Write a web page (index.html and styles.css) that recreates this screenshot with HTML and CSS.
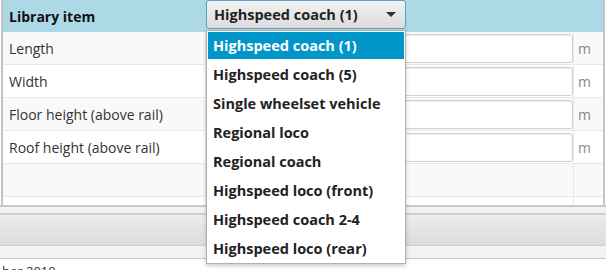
FILE: index.html
```html
<!DOCTYPE html>
<html lang="en">
<head>
    <meta charset="UTF-8">
    <meta name="viewport" content="width=device-width, initial-scale=1.0">
    <title>Library item</title>
    <link rel="stylesheet" href="styles.css">
</head>
<body>
    <div class="page">
        <div class="panel">
            <div class="row header">
                <div class="cell label"><b>Library item</b></div>
                <div class="cell value"></div>
                <div class="cell unit"></div>
            </div>
            <div class="row odd">
                <div class="cell label">Length</div>
                <div class="cell value"><div class="input"></div></div>
                <div class="cell unit">m</div>
            </div>
            <div class="row">
                <div class="cell label">Width</div>
                <div class="cell value"><div class="input"></div></div>
                <div class="cell unit">m</div>
            </div>
            <div class="row odd">
                <div class="cell label">Floor height (above rail)</div>
                <div class="cell value"><div class="input"></div></div>
                <div class="cell unit">m</div>
            </div>
            <div class="row">
                <div class="cell label">Roof height (above rail)</div>
                <div class="cell value"><div class="input"></div></div>
                <div class="cell unit">m</div>
            </div>
            <div class="row odd">
                <div class="cell label"></div>
                <div class="cell value"></div>
                <div class="cell unit"></div>
            </div>
            <div class="row short">
                <div class="cell label"></div>
                <div class="cell value"></div>
                <div class="cell unit"></div>
            </div>
        </div>
        <div class="footer">
            <div class="strip"></div>
            <div class="buttonbar"></div>
            <div class="strip low"></div>
        </div>
        <div class="status">ber 2010</div>

        <!-- open combo box, lies over the table -->
        <div class="combo">
            <div class="combo-button">
                <span>Highspeed coach (1)</span>
                <span class="arrow"></span>
            </div>
            <ul class="combo-list">
                <li class="selected">Highspeed coach (1)</li>
                <li>Highspeed coach (5)</li>
                <li>Single wheelset vehicle</li>
                <li>Regional loco</li>
                <li>Regional coach</li>
                <li>Highspeed loco (front)</li>
                <li>Highspeed coach 2-4</li>
                <li>Highspeed loco (rear)</li>
            </ul>
        </div>
    </div>
</body>
</html>
```

FILE: styles.css
```css
body {
    margin: 0;
    padding: 0;
    font-family: "Open Sans", "Noto Sans", sans-serif;
    font-size: 14px;
    color: #333;
    background: #fff;
    overflow: hidden;
}

.page {
    position: relative;
    width: 606px;
    height: 270px;
}

.panel {
    margin-left: 1px;
    width: 600px;
    border-left: 2px solid #c4c4c4;
    border-right: 2px solid #c4c4c4;
}

.row {
    display: flex;
    height: 32px;
    border-bottom: 1px solid #e8e8e8;
    background: #fff;
}

.row.odd {
    background: #f9f9f9;
}

.row.header {
    height: 32px;
    border-bottom: none;
    background: #add8e6;
    color: #111;
}

.row.short {
    height: 8px;
    border-bottom: none;
}

.cell {
    display: flex;
    align-items: center;
}

.label {
    width: 196px;
    padding-left: 6px;
    border-right: 1px solid #e8e8e8;
    color: #333;
}

.header .label {
    border-right: none;
    color: #111;
}

.value {
    width: 367px;
    border-right: 1px solid #e8e8e8;
}

.header .value {
    border-right: none;
}

.unit {
    flex: 1;
    padding-left: 4px;
    color: #888;
}

.input {
    width: 366px;
    height: 27px;
    background: #fff;
    border: 1px solid #d0d0d0;
    border-radius: 3px;
    box-shadow: inset 0 1px 1px #eee;
}

.footer {
    border-top: 2px solid #c8c8c8;
    width: 606px;
}

.strip {
    height: 6px;
    background: #f2f2f2;
    border-bottom: 2px solid #cfcfcf;
}

.buttonbar {
    height: 30px;
    background: linear-gradient(#ececec, #dcdcdc);
    border-bottom: 1px solid #cfcfcf;
}

.strip.low {
    height: 12px;
    border-bottom: 1px solid #c8c8c8;
}

.status {
    padding-left: 2px;
    font-size: 13px;
    line-height: 18px;
    margin-top: 3px;
    color: #333;
}

.combo {
    position: absolute;
    left: 206px;
    top: 0;
    width: 200px;
    font-size: 14.5px;
}

.combo-button {
    display: flex;
    align-items: center;
    justify-content: space-between;
    height: 27px;
    padding: 0 7px 0 7px;
    border: 1px solid #5b9fc4;
    border-radius: 3px;
    background: linear-gradient(#f2f2f2, #dcdcdc);
    font-weight: bold;
    color: #222;
}

.arrow {
    width: 0;
    height: 0;
    border-left: 5px solid transparent;
    border-right: 5px solid transparent;
    border-top: 5px solid #333;
    margin-right: 2px;
}

.combo-list {
    list-style: none;
    margin: 1px 0 0 0;
    padding: 0;
    background: #fff;
    border: 1px solid #b0b0b0;
    box-shadow: 0 2px 4px rgba(0, 0, 0, 0.2);
}

.combo-list li {
    height: 29px;
    line-height: 29px;
    padding-left: 6px;
    font-weight: bold;
    color: #222;
}

.combo-list li.selected {
    background: #0096c9;
    color: #fff;
    margin: 1px;
    height: 27px;
    line-height: 27px;
    padding-left: 5px;
}
```
